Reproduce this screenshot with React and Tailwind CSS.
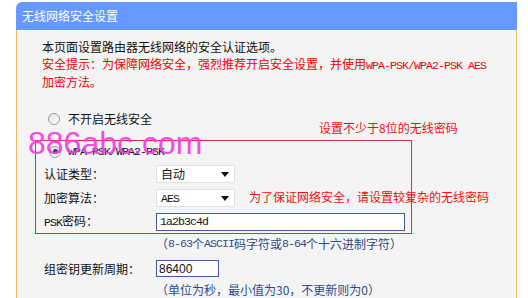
import React from "react";

const mono = "font-['Liberation_Mono',monospace] text-[11.5px] tracking-[-0.9px]";

function Radio({ checked }) {
  return (
    <span className="w-[12px] h-[12px] rounded-full border border-[#9a9a9a] bg-gradient-to-br from-[#e2e2e2] to-[#ffffff] flex items-center justify-center shrink-0">
      {checked && <span className="w-[5px] h-[5px] rounded-full bg-[#2f4a44]" />}
    </span>
  );
}

function Select({ children }) {
  return (
    <div className="w-[79px] h-[18px] bg-white border border-[#e2e2e2] flex items-center justify-between pl-[4px] pr-[5px]">
      <span className="leading-none">{children}</span>
      <svg width="8" height="5" viewBox="0 0 8 5">
        <path d="M0 0 L8 0 L4 5 Z" fill="#111" />
      </svg>
    </div>
  );
}

export default function App() {
  return (
    <div className="w-[528px] h-[298px] bg-white relative overflow-hidden font-['Noto_Sans_CJK_SC',sans-serif] text-[12px] text-[#111]">
      <div className="ml-[16px] pt-[2px] w-[501px]">
        <div className="h-[28px] bg-[#6699ff] rounded-tl-[6px] text-white flex items-center pl-[6px] text-[12px]">
          无线网络安全设置
        </div>
        <div className="h-[270px] bg-[#f4f4f4] border-l border-r border-[#efb962] pl-[25px] pt-[9px]">
          <div className="leading-[16.5px]">
            <div>本页面设置路由器无线网络的安全认证选项。</div>
            <div className="text-[#ee0000]">
              安全提示：为保障网络安全，强烈推荐开启安全设置，并使用<span className={mono}>WPA-PSK/WPA2-PSK AES</span>
            </div>
            <div className="text-[#ee0000]">加密方法。</div>
          </div>

          <div className="mt-[18px] h-[20px] flex items-center pl-[6px] gap-[8px]">
            <Radio />
            <span>不开启无线安全</span>
          </div>
          <div className="mt-[13px] h-[20px] flex items-center pl-[7px] gap-[7px]">
            <Radio checked />
            <span className={mono}>WPA-PSK/WPA2-PSK</span>
          </div>

          <div className="pl-[2px]">
            <div className="h-[25px] flex items-center">
              <span className="w-[112px]">认证类型：</span>
              <Select>自动</Select>
            </div>
            <div className="h-[23px] flex items-center">
              <span className="w-[112px]">加密算法：</span>
              <Select><span className={mono}>AES</span></Select>
            </div>
            <div className="h-[24px] flex items-center">
              <span className="w-[112px]"><span className={mono}>PSK</span>密码：</span>
              <div className="w-[249px] h-[18px] bg-white border border-[#3f5a9e] flex items-center pl-[3px]">
                <span className={mono}>1a2b3c4d</span>
              </div>
            </div>
            <div className="h-[20px] flex items-center pl-[112px] text-[#2f4c88]">
              （<span className={mono}>8-63</span>个<span className={mono}>ASCII</span>码字符或<span className={mono}>8-64</span>个十六进制字符）
            </div>
            <div className="mt-[3px] h-[24px] flex items-center">
              <span className="w-[112px]">组密钥更新周期：</span>
              <div className="w-[63px] h-[17px] bg-white border border-[#3f5a9e] flex items-center pl-[2px] font-['Liberation_Sans',sans-serif] text-[12px]">
                86400
              </div>
            </div>
            <div className="h-[18px] flex items-center pl-[112px] text-[#2f4c88]">
              （单位为秒，最小值为30，不更新则为0）
            </div>
          </div>
        </div>
      </div>

      {/* annotations */}
      <div className="absolute left-[35px] top-[140px] w-[377px] h-[94px] border border-[#e0303c] pointer-events-none" />
      <div className="absolute left-[319px] top-[120px] text-[#ee1111] leading-[16px] text-[12px]">
        设置不少于8位的无线密码
      </div>
      <div className="absolute left-[249px] top-[189px] text-[#ee1111] leading-[16px] text-[12px]">
        为了保证网络安全，请设置较复杂的无线密码
      </div>
      <div className="absolute left-[28px] top-[127px] font-['Liberation_Sans',sans-serif] text-[32px] leading-[32px] text-[#f03ce0] opacity-90">
        886abc.com
      </div>
    </div>
  );
}
